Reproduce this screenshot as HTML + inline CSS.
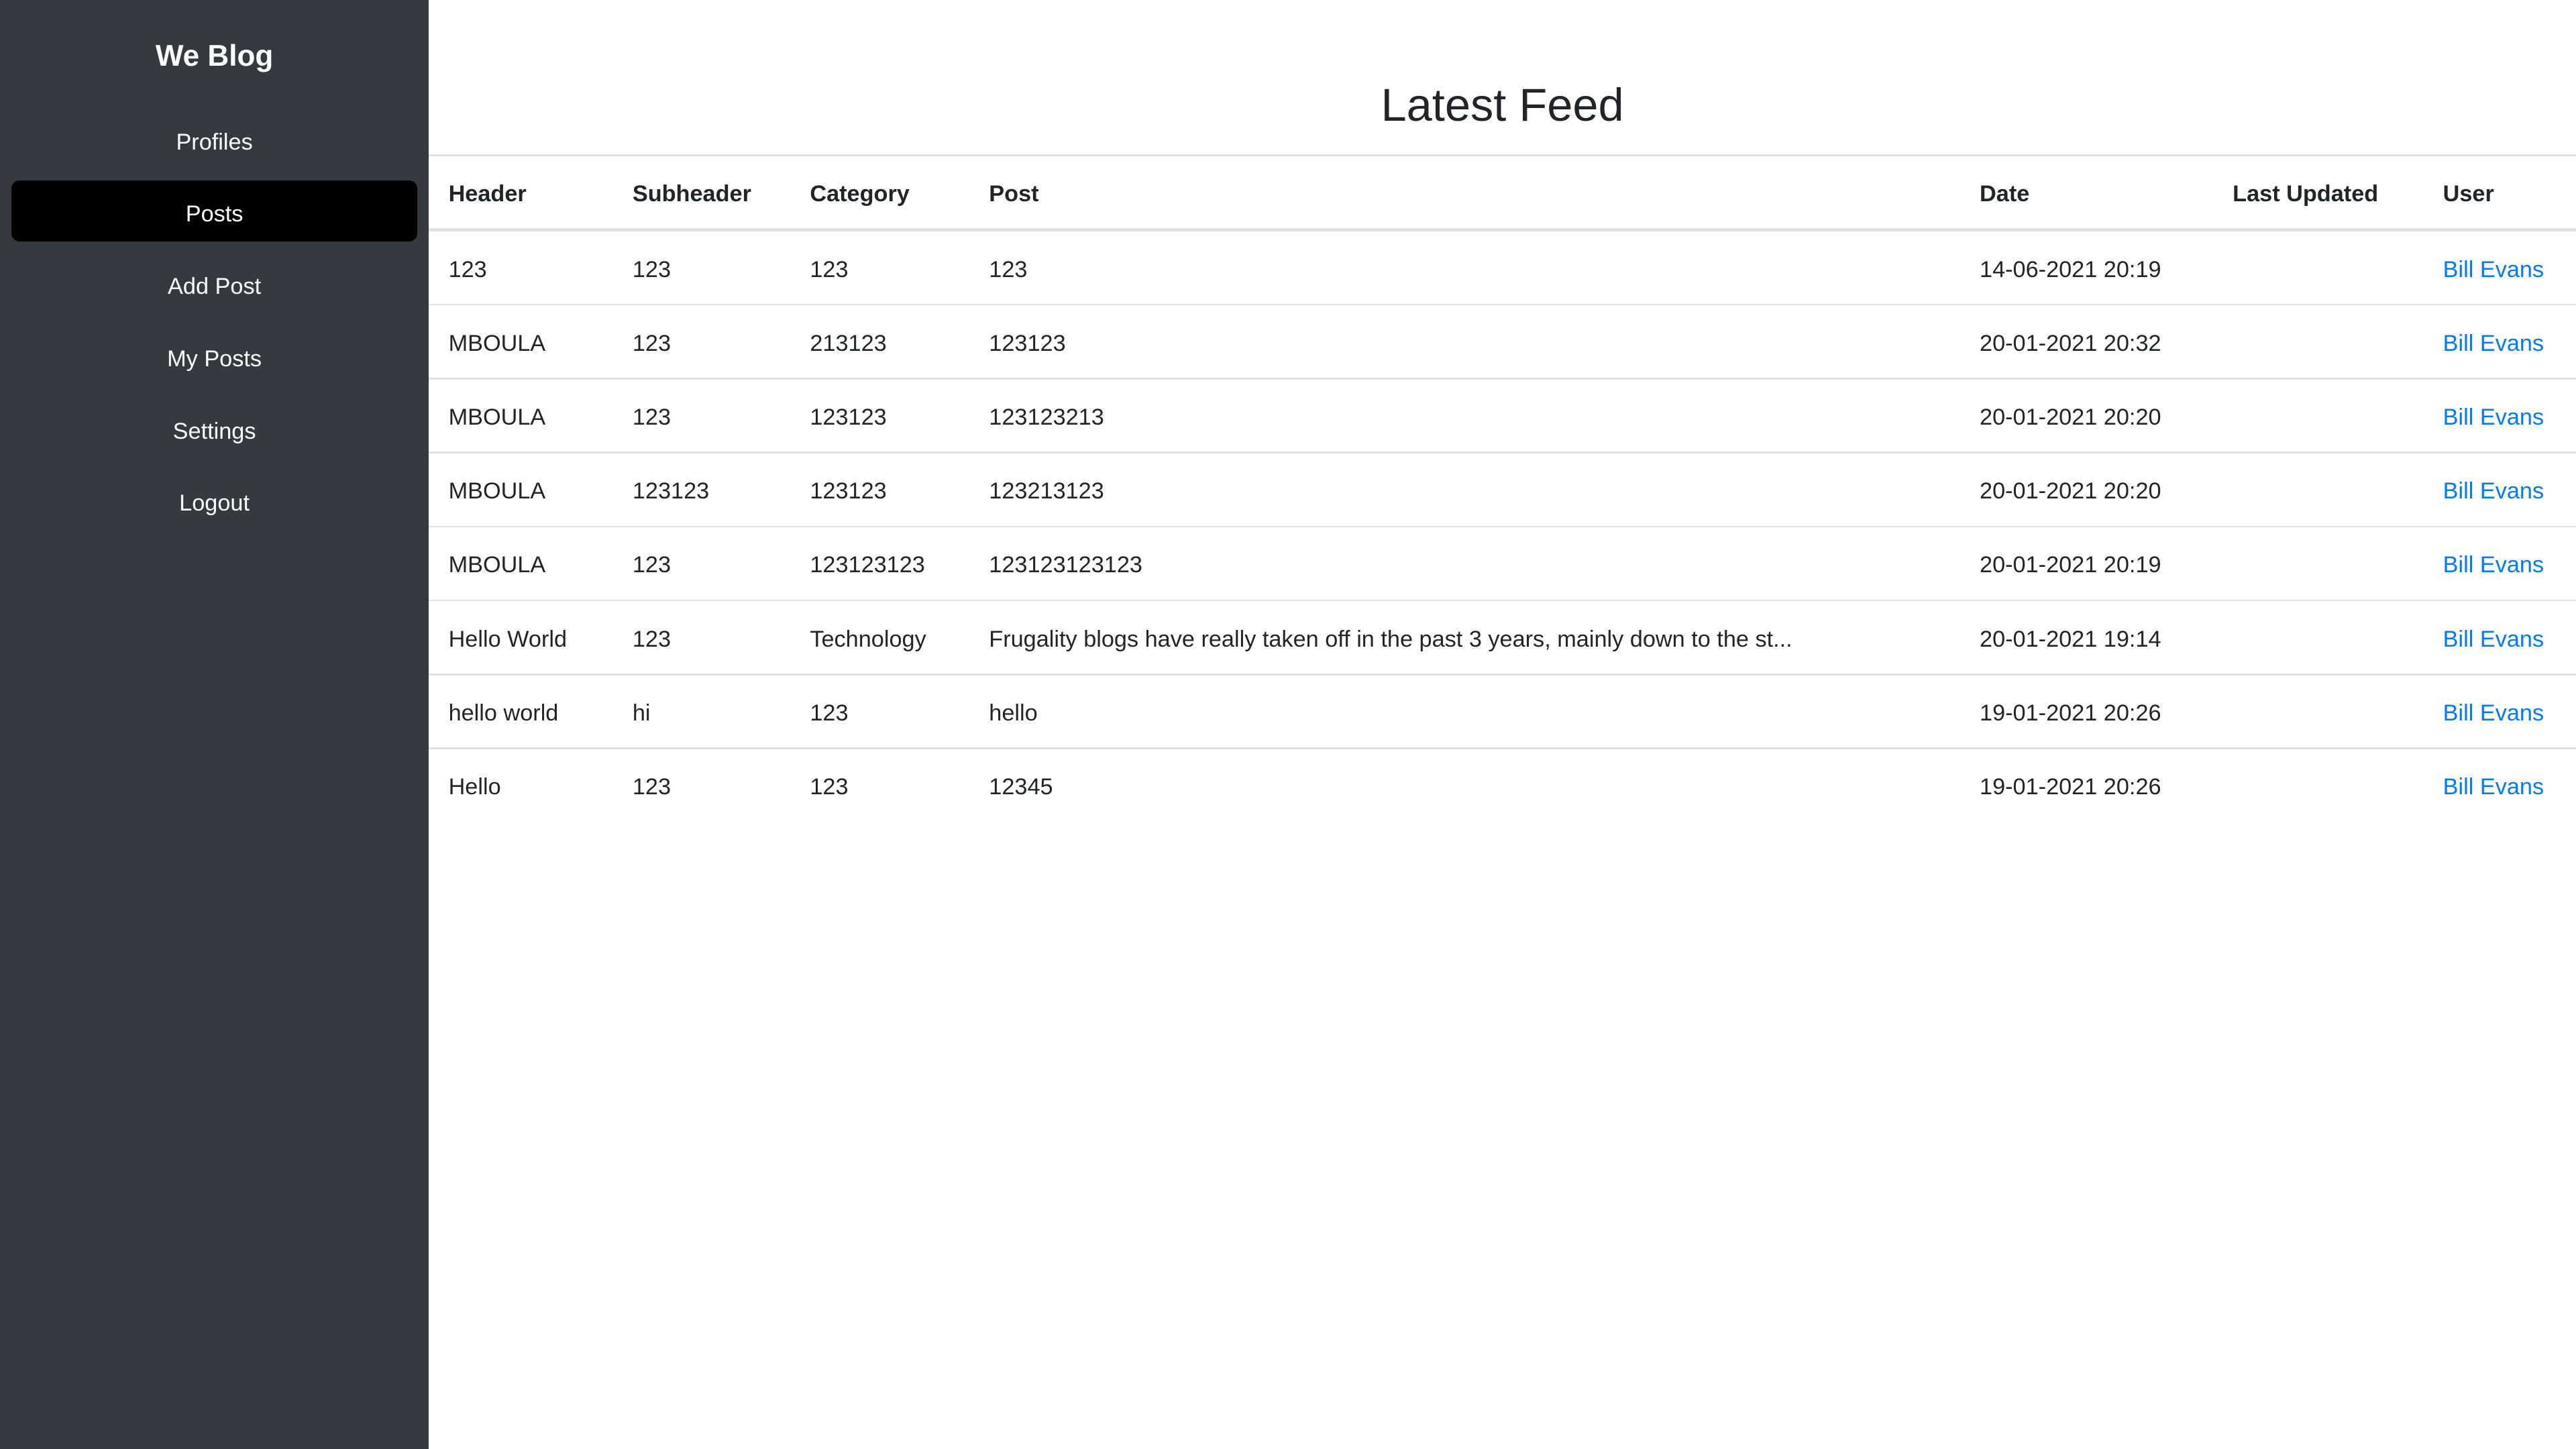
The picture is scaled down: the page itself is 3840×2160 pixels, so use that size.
<!DOCTYPE html>
<html><head><meta charset="utf-8"><style>
html,body{margin:0;padding:0}
body{width:1568px;height:882px;zoom:2.44898;overflow:hidden;font-family:"Liberation Sans",sans-serif;color:#212529;background:#fff;position:relative}
.side{position:absolute;left:0;top:0;width:261px;height:882px;background:#343a40}
.side .t{position:absolute;left:0;width:261px;text-align:center;color:#fff}
.brand{top:24px;font-size:18px;font-weight:bold}
.nav{font-size:14px;height:37px;line-height:37px}
.act{position:absolute;left:7px;top:110px;width:247px;height:37px;background:#000;border-radius:5px}
h1{position:absolute;left:261px;width:1307px;top:45px;margin:0;text-align:center;font-size:28px;font-weight:500;line-height:38px}
.line{position:absolute;left:261px;width:1307px;height:1px;background:#dee2e6}
.c{position:absolute;font-size:14px;white-space:nowrap;line-height:18px;margin-top:1px}
.b{font-weight:bold}
a{color:#007bff;text-decoration:none}
</style></head><body>
<div class="side">
<div class="t brand">We Blog</div>
<div class="act"></div>
<div class="t nav" style="top:68px">Profiles</div>
<div class="t nav" style="top:112px">Posts</div>
<div class="t nav" style="top:156px">Add Post</div>
<div class="t nav" style="top:200px">My Posts</div>
<div class="t nav" style="top:244px">Settings</div>
<div class="t nav" style="top:288px">Logout</div>
</div>
<h1>Latest Feed</h1>
<div class="line" style="top:94px"></div>
<div class="line" style="top:139px;height:2px"></div>
<div class="line" style="top:185px"></div>
<div class="line" style="top:230px"></div>
<div class="line" style="top:275px"></div>
<div class="line" style="top:320px"></div>
<div class="line" style="top:365px"></div>
<div class="line" style="top:410px"></div>
<div class="line" style="top:455px"></div>
<div class="c b" style="left:273px;top:108px">Header</div>
<div class="c b" style="left:385px;top:108px">Subheader</div>
<div class="c b" style="left:493px;top:108px">Category</div>
<div class="c b" style="left:602px;top:108px">Post</div>
<div class="c b" style="left:1205px;top:108px">Date</div>
<div class="c b" style="left:1359px;top:108px">Last Updated</div>
<div class="c b" style="left:1487px;top:108px">User</div>

<div class="c" style="left:273px;top:154px">123</div><div class="c" style="left:385px;top:154px">123</div><div class="c" style="left:493px;top:154px">123</div><div class="c" style="left:602px;top:154px">123</div><div class="c" style="left:1205px;top:154px">14-06-2021 20:19</div><div class="c" style="left:1487px;top:154px"><a>Bill Evans</a></div>

<div class="c" style="left:273px;top:199px">MBOULA</div><div class="c" style="left:385px;top:199px">123</div><div class="c" style="left:493px;top:199px">213123</div><div class="c" style="left:602px;top:199px">123123</div><div class="c" style="left:1205px;top:199px">20-01-2021 20:32</div><div class="c" style="left:1487px;top:199px"><a>Bill Evans</a></div>

<div class="c" style="left:273px;top:244px">MBOULA</div><div class="c" style="left:385px;top:244px">123</div><div class="c" style="left:493px;top:244px">123123</div><div class="c" style="left:602px;top:244px">123123213</div><div class="c" style="left:1205px;top:244px">20-01-2021 20:20</div><div class="c" style="left:1487px;top:244px"><a>Bill Evans</a></div>

<div class="c" style="left:273px;top:289px">MBOULA</div><div class="c" style="left:385px;top:289px">123123</div><div class="c" style="left:493px;top:289px">123123</div><div class="c" style="left:602px;top:289px">123213123</div><div class="c" style="left:1205px;top:289px">20-01-2021 20:20</div><div class="c" style="left:1487px;top:289px"><a>Bill Evans</a></div>

<div class="c" style="left:273px;top:334px">MBOULA</div><div class="c" style="left:385px;top:334px">123</div><div class="c" style="left:493px;top:334px">123123123</div><div class="c" style="left:602px;top:334px">123123123123</div><div class="c" style="left:1205px;top:334px">20-01-2021 20:19</div><div class="c" style="left:1487px;top:334px"><a>Bill Evans</a></div>

<div class="c" style="left:273px;top:379px">Hello World</div><div class="c" style="left:385px;top:379px">123</div><div class="c" style="left:493px;top:379px">Technology</div><div class="c" style="left:602px;top:379px">Frugality blogs have really taken off in the past 3 years, mainly down to the st...</div><div class="c" style="left:1205px;top:379px">20-01-2021 19:14</div><div class="c" style="left:1487px;top:379px"><a>Bill Evans</a></div>

<div class="c" style="left:273px;top:424px">hello world</div><div class="c" style="left:385px;top:424px">hi</div><div class="c" style="left:493px;top:424px">123</div><div class="c" style="left:602px;top:424px">hello</div><div class="c" style="left:1205px;top:424px">19-01-2021 20:26</div><div class="c" style="left:1487px;top:424px"><a>Bill Evans</a></div>

<div class="c" style="left:273px;top:469px">Hello</div><div class="c" style="left:385px;top:469px">123</div><div class="c" style="left:493px;top:469px">123</div><div class="c" style="left:602px;top:469px">12345</div><div class="c" style="left:1205px;top:469px">19-01-2021 20:26</div><div class="c" style="left:1487px;top:469px"><a>Bill Evans</a></div>
</body></html>
